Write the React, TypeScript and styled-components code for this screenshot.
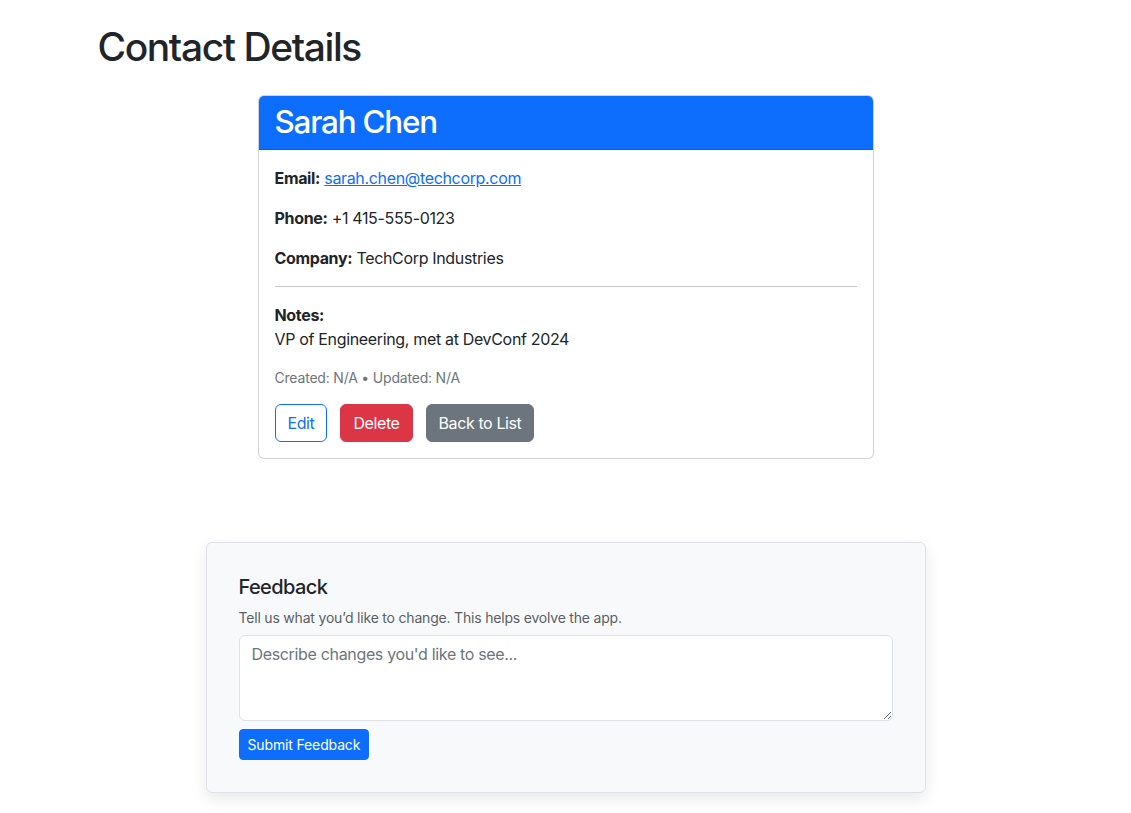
import React from "react";
import styled, { createGlobalStyle } from "styled-components";

const GlobalStyle = createGlobalStyle`
  *, *::before, *::after { box-sizing: border-box; }
  body {
    margin: 0;
    font-family: Inter, "Noto Sans", "Liberation Sans", sans-serif;
    font-size: 16px;
    line-height: 1.5;
    letter-spacing: -0.021em;
    color: #212529;
    background: #fff;
  }
`;

const Container = styled.div`
  max-width: 960px;
  margin: 0 auto;
  padding: 24px 12px;
`;

const PageTitle = styled.h1`
  font-size: 38.97px;
  font-weight: 500;
  line-height: 1.2;
  letter-spacing: -0.036em;
  margin: 0 0 24px;
`;

const CardWrap = styled.div`
  width: 616px;
  margin: 0 auto;
`;

const Card = styled.div`
  border: 1px solid rgba(0, 0, 0, 0.175);
  border-radius: 6px;
  overflow: hidden;
  background: #fff;
`;

const CardHeader = styled.div`
  background: #0d6efd;
  color: #fff;
  padding: 8px 16px;
  border-bottom: 1px solid rgba(0, 0, 0, 0.175);
`;

const CardName = styled.h2`
  margin: 0;
  font-size: 31.4px;
  font-weight: 500;
  line-height: 1.2;
  letter-spacing: -0.038em;
`;

const CardBody = styled.div`
  padding: 16px;
`;

const Para = styled.p`
  margin: 0 0 16px;
`;

const Label = styled.strong`
  font-weight: 700;
`;

const Link = styled.a`
  color: #0d6efd;
  text-decoration: underline;
`;

const Rule = styled.hr`
  margin: 16px 0;
  border: 0;
  border-top: 1px solid rgba(33, 37, 41, 0.25);
`;

const Meta = styled.p`
  margin: 0 0 16px;
  font-size: 14px;
  letter-spacing: -0.014em;
  color: #6c757d;
`;

const Actions = styled.div`
  display: flex;
  gap: 13px;
`;

type Variant = "outline" | "danger" | "secondary" | "primary";

const colors: Record<Variant, { bg: string; fg: string; border: string }> = {
  outline: { bg: "transparent", fg: "#0d6efd", border: "#0d6efd" },
  danger: { bg: "#dc3545", fg: "#fff", border: "#dc3545" },
  secondary: { bg: "#6c757d", fg: "#fff", border: "#6c757d" },
  primary: { bg: "#0d6efd", fg: "#fff", border: "#0d6efd" },
};

const Button = styled.button<{ $variant: Variant; $small?: boolean }>`
  font-family: inherit;
  font-size: ${(p) => (p.$small ? "14px" : "16px")};
  letter-spacing: ${(p) => (p.$small ? "-0.01em" : "-0.025em")};
  line-height: 1.5;
  font-weight: 400;
  padding: ${(p) => (p.$small ? "4px 8px" : "6px 12px")};
  border-radius: ${(p) => (p.$small ? "4px" : "6px")};
  border: 1px solid ${(p) => colors[p.$variant].border};
  background: ${(p) => colors[p.$variant].bg};
  color: ${(p) => colors[p.$variant].fg};
  cursor: pointer;
`;

const FeedbackBox = styled.div`
  max-width: 720px;
  margin: 83px auto 0;
  padding: 32px;
  background: #f8f9fa;
  border: 1px solid #dee2e6;
  border-radius: 6px;
  box-shadow: 0 6px 16px rgba(0, 0, 0, 0.09);
`;

const FeedbackTitle = styled.h5`
  margin: 0 0 8px;
  font-size: 20px;
  font-weight: 500;
  line-height: 1.2;
  letter-spacing: -0.03em;
`;

const FeedbackHint = styled.p`
  margin: 0 0 7px;
  font-size: 14px;
  letter-spacing: -0.014em;
  color: #595f65;
`;

const TextArea = styled.textarea`
  display: block;
  width: 100%;
  font-family: inherit;
  font-size: 16px;
  letter-spacing: -0.021em;
  line-height: 1.5;
  padding: 6px 12px;
  color: #212529;
  background: #fff;
  border: 1px solid #dee2e6;
  border-radius: 6px;
  margin-bottom: 8px;
  resize: vertical;
  &::placeholder {
    color: #6c757d;
    opacity: 1;
  }
`;

export default function App() {
  return (
    <>
      <GlobalStyle />
      <Container>
        <PageTitle>Contact Details</PageTitle>
        <CardWrap>
          <Card>
            <CardHeader>
              <CardName>Sarah Chen</CardName>
            </CardHeader>
            <CardBody>
              <Para>
                <Label>Email:</Label>{" "}
                <Link href="#">sarah.chen@techcorp.com</Link>
              </Para>
              <Para>
                <Label>Phone:</Label> +1 415-555-0123
              </Para>
              <Para>
                <Label>Company:</Label> TechCorp Industries
              </Para>
              <Rule />
              <Para>
                <Label>Notes:</Label>
                <br />
                VP of Engineering, met at DevConf 2024
              </Para>
              <Meta>Created: N/A • Updated: N/A</Meta>
              <Actions>
                <Button $variant="outline">Edit</Button>
                <Button $variant="danger">Delete</Button>
                <Button $variant="secondary">Back to List</Button>
              </Actions>
            </CardBody>
          </Card>
        </CardWrap>
        <FeedbackBox>
          <FeedbackTitle>Feedback</FeedbackTitle>
          <FeedbackHint>
            Tell us what you’d like to change. This helps evolve the app.
          </FeedbackHint>
          <TextArea rows={3} placeholder="Describe changes you'd like to see..." />
          <Button $variant="primary" $small>
            Submit Feedback
          </Button>
        </FeedbackBox>
      </Container>
    </>
  );
}
